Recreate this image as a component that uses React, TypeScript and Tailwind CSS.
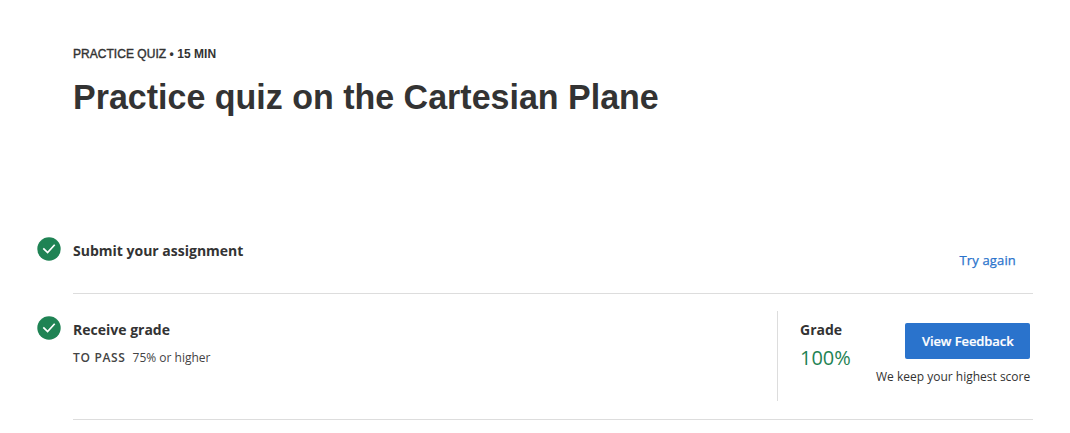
const Check = () => (
  <svg className="h-6 w-6 shrink-0" viewBox="0 0 24 24" fill="none">
    <circle cx="12" cy="12" r="11.7" fill="#1f8354" />
    <path d="M6.3 11.4l4.3 4.2 7.1-7.8" stroke="#fff" strokeWidth="1.7" />
  </svg>
);

export default function App() {
  return (
    <main className="h-[433px] w-[1070px] overflow-hidden bg-white pl-[37px] pr-[37px] font-['Open_Sans',sans-serif] text-[#333]">
      <header className="h-[237px] pl-9 pt-[46px] font-['Liberation_Sans',sans-serif]">
        <p className="text-[12px] leading-4 tracking-[0.04px] [-webkit-text-stroke:0.4px_#333]">PRACTICE QUIZ <b className="[-webkit-text-stroke:0]">• 15 MIN</b></p>
        <h1 className="mt-[10px] origin-center scale-y-[1.05] whitespace-nowrap text-[34px] font-bold leading-[48px]">Practice quiz on the Cartesian Plane</h1>
      </header>
      <section className="flex h-[57px]">
        <Check />
        <div className="ml-3 flex flex-1 justify-between border-b border-[#ddd]">
          <h2 className="pt-1 text-[14px] font-bold leading-5">Submit your assignment</h2>
          <button className="mr-[17px] mt-[13px] h-5 text-[13px] leading-5 tracking-[0.15px] text-[#2a73cc] [-webkit-text-stroke:0.25px_#2a73cc]">Try again</button>
        </div>
      </section>
      <section className="flex h-[126px] pt-[22px]">
        <Check />
        <div className="-mt-[22px] ml-3 flex flex-1 border-b border-[#ddd] pt-[17px]">
          <div className="w-[704px] pt-[9px]">
            <h2 className="text-[14px] font-bold leading-5">Receive grade</h2>
            <p className="mt-2 text-[12px] leading-5 text-[#444]"><span className="mr-[7px] font-semibold tracking-[0.68px]">TO PASS</span>75% or higher</p>
          </div>
          <div className="h-[90px] w-[99px] whitespace-nowrap border-l border-[#ddd] pl-[22px] pt-[9px]">
            <h2 className="text-[14px] font-bold leading-5">Grade</h2>
            <p className="mt-[3px] text-[20px] leading-[30px] text-[#1f8354]">100%</p>
          </div>
          <div className="flex flex-1 flex-col items-end pr-[3px] pt-3">
            <button className="h-9 w-[125px] rounded-[2px] bg-[#2a73cc] pt-px text-[13px] font-semibold tracking-[-0.08px] text-white [-webkit-text-stroke:0.2px_#fff]">View Feedback</button>
            <p className="mt-2 whitespace-nowrap text-[12px] leading-5">We keep your highest score</p>
          </div>
        </div>
      </section>
    </main>
  );
}
